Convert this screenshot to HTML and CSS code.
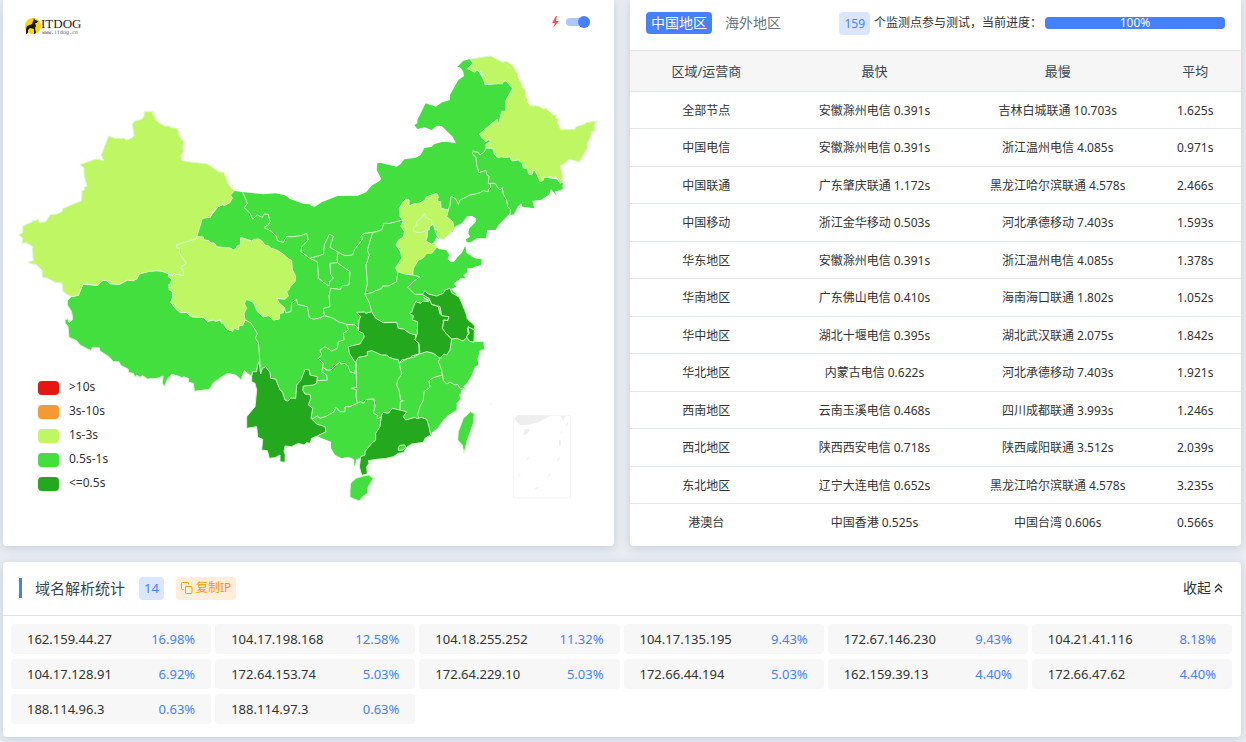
FILE: index.html
```html
<!DOCTYPE html>
<html lang="zh-CN">
<head>
<meta charset="utf-8">
<meta name="viewport" content="width=device-width, initial-scale=1">
<title>ITDOG</title>
<link rel="stylesheet" href="styles.css">
</head>
<body>
<main class="page">
  <section class="card map-card">
    <svg class="map" viewBox="9 0 1833 1638" role="img" aria-label="中国地区">
      <g class="land">
        <g transform="translate(1140 120)">
          <path d="M0 368L50 380 62 372 73 358 108 353 122 345 133 324 155 320 162 313 185 306 200 305 228 310 218 290 185 258 170 257 155 270 135 262 112 267 103 255 112 250 112 240 137 190 167 200 187 187 210 180 210 165 235 120 252 108 250 95 240 82 232 80 250 62 270 57 290 85 310 120 385 125 405 140 390 200 370 230 340 300 400 340 440 370 480 410 540 420 548 430 548 448 525 455 530 467 513 447 508 463 483 480 457 482 463 505 427 500 425 490 413 500 402 523 392 525 390 520 355 555 347 570 322 570 318 595 290 595 272 607 260 607 258 598 270 590 265 580 268 565 288 545 287 535 277 528 262 528 245 550 224 560 220 572 205 585 190 597 178 597 165 592 163 610 170 622 178 628 198 630 208 645 203 657 213 667 222 665 233 650 245 640 256 617 260 640 285 655 305 658 303 675 285 680 275 685 262 685 262 697 250 705 257 715 240 715 235 722 0 722 0 425 3 415 -10 390 -8 370Z"/>
        </g>
        <g transform="translate(690 510)">
          <path d="M13 63L38 66 100 73 135 70 165 76 180 87 195 92 220 102 240 103 243 108 255 110 275 97 322 78 383 77 408 67 425 47 453 30 460 100 520 329 690 325 672 340 678 350 663 357 688 382 708 430 712 447 735 468 732 520 700 600 0 600 -60 270 -100 200 -83 145 -59 142 -35 110 0 98 7 85 2 74Z"/>
        </g>
        <g transform="translate(690 930)">
          <path d="M732 95L760 95 763 118 750 120 745 140 742 145 745 165 735 170 725 195 712 218 700 230 707 238 693 240 692 252 687 255 692 265 680 280 680 300 655 315 640 330 622 355 605 368 602 378 585 385 580 397 545 402 530 412 520 428 505 430 490 440 470 445 440 448 415 452 392 445 378 447 376 465 373 468 372 448 355 440 335 445 315 435 303 415 303 395 275 385 262 378 65 200 85 100 85 0 700 0Z"/>
          <path class="edge" d="M362 520L378 505 400 498 415 495 430 505 415 530 412 550 398 560 388 573 375 568 360 562 360 540Z"/>
          <path class="edge" d="M685 365L700 325 722 305 733 312 730 340 712 390 702 430 697 405 683 390Z"/>
        </g>
      </g>
      <g class="edge" transform="translate(0 270)">
        <path class="land" d="M213 620L235 616 249 583 292 586 309 571 321 572 328 581 358 583 383 570 398 572 411 566 417 552 447 544 467 542 484 543 507 552 505 560 515 568 512 583 507 583 508 600 517 604 519 621 512 636 528 658 543 668 559 667 575 680 612 683 622 694 640 690 648 694 664 689 680 716 695 722 717 707 728 706 735 690 752 698 757 706 772 730 766 745 775 757 778 790 780 830 776 815 770 845 758 845 755 860 733 842 723 870 716 862 707 855 683 850 663 862 640 878 628 898 583 904 580 880 566 877 565 865 552 860 545 863 535 858 515 853 502 868 493 890 487 880 489 858 472 865 442 867 427 856 421 862 410 855 405 862 400 850 386 848 384 837 362 826 357 815 340 815 327 800 300 783 298 773 277 772 273 782 240 765 230 752 207 742 204 710 196 700 195 690 203 686 208 698 218 688 215 665 202 645 202 632Z"/>
        <path class="lime" d="M590 440L610 441 612 450 627 452 631 458 644 460 650 470 675 473 688 473 700 480 709 475 711 468 721 464 722 442 755 453 762 448 775 447 785 452 795 465 806 468 813 475 825 478 850 492 859 502 875 512 877 540 887 558 885 575 870 590 868 598 860 605 865 618 855 628 830 625 840 642 853 652 850 668 838 672 838 687 820 690 805 677 790 681 772 665 760 637 740 628 733 640 740 655 732 670 735 690 728 706 717 707 715 720 702 714 698 725 695 718 690 722 680 716 671 700 664 700 661 689 648 694 640 690 622 694 612 683 575 680 559 667 543 668 528 658 512 636 519 621 517 604 508 600 507 583 512 583 515 568 505 560 507 552 519 556 521 550 532 553 550 557 550 544 541 532 559 519 547 503 537 489 539 475 532 475 528 465 588 446Z"/>
        <path class="lime" d="M432 65L460 65 458 73 466 83 464 88 484 103 495 109 507 108 514 113 527 114 536 124 536 135 549 153 551 162 547 172 551 183 542 196 546 212 580 217 622 222 655 245 672 248 686 285 703 303 692 314 697 325 689 338 672 347 668 342 655 350 635 368 631 382 607 385 590 440 588 446 528 465 532 475 539 475 537 489 547 503 559 519 541 532 550 544 550 557 532 553 521 550 519 556 507 552 484 543 467 542 447 544 417 552 411 566 398 572 383 570 358 583 328 581 321 572 309 571 292 586 268 583 249 583 242 598 235 616 213 620 201 613 189 605 186 579 166 577 143 565 127 562 126 540 108 523 96 522 84 517 102 511 99 504 97 469 79 458 66 460 68 445 57 434 68 428 69 408 98 395 97 391 107 393 114 386 119 399 137 395 151 374 172 372 186 365 188 356 245 332 246 302 254 300 252 291 261 289 252 254 252 233 240 224 288 207 311 212 304 195 326 138 344 145 371 145 380 150 395 144 402 137 397 103 404 93 424 89 432 79Z"/>
      </g>
      <g class="edge" transform="translate(1140 120)">
        <path class="lime" d="M270 57L332 48 368 67 380 64 402 80 402 87 413 100 413 112 425 130 427 142 436 152 438 173 443 177 443 187 450 197 475 198 490 207 497 205 520 225 530 226 526 234 535 238 532 248 542 269 585 268 588 260 612 253 622 247 652 243 642 256 645 272 635 275 632 290 622 310 622 323 610 345 605 352 598 366 567 357 556 368 542 377 545 400 548 408 548 425 540 430 528 410 520 413 510 410 492 413 488 423 480 425 466 392 460 390 457 402 447 404 442 387 430 384 427 370 415 360 395 363 390 350 375 353 365 350 353 353 343 343 338 324 318 324 318 312 330 306 330 297 316 305 298 282 352 237 356 255 365 214 377 214 377 182 398 145 377 122 371 122 368 131 355 131 315 134 305 98 290 90 285 97 263 86 279 70Z"/>
        <path class="lime" d="M70 485L78 477 87 480 87 498 100 492 118 490 135 480 140 470 170 460 175 470 172 483 182 485 183 505 205 510 200 530 218 545 222 565 205 585 190 597 178 597 172 585 172 570 160 567 160 553 150 558 150 570 142 573 142 600 165 612 170 622 155 640 140 640 128 655 115 660 100 685 98 705 75 702 52 695 47 683 65 655 62 635 48 615 55 600 70 592 73 575 62 558 70 543 60 530 58 505Z"/>
        <path class="land" d="M150 558L160 553 165 570 172 590 163 608 155 612 137 603 142 590 142 573Z"/>
        <path class="line" d="M100 573L102 560 112 557 110 545 125 532 133 520 140 535 155 540 155 555 147 560 148 570 137 570 128 577 110 577Z"/>
        <path class="line" d="M338 324L318 324 313 335 300 345 295 337 283 335 280 332 277 342 288 352 290 375 297 398 318 391 320 403 327 408 325 430 345 430 355 445 360 450 367 443 370 463 380 480 383 500 392 510 390 522M325 430L332 432 332 442 325 448 325 455 310 452 300 458 285 462 270 465 240 480 235 493 228 478 220 472 213 470 210 495 205 510M70 540L55 543 30 550 12 550 5 570 -12 575"/>
      </g>
      <g class="edge" transform="translate(690 510)">
        <path class="line" d="M38 66L52 100 43 113 60 130 68 147 82 135 97 142 102 132 115 133 120 155 115 165 102 172 125 185 140 200 142 212 160 217 170 200 190 200 212 197 230 190 235 210 215 230 213 245 240 265 280 253 283 225 298 193 310 198 300 232 325 247 345 257 368 255 373 240 397 208 395 195 405 190 428 187 440 185M240 265L262 275 265 310 265 325 285 340 297 348 300 333 310 325 302 312 300 280 322 278 322 258 325 247M322 278L360 305 357 345 335 348 332 358 302 355 297 378 300 410 280 415 283 435 270 445M163 412L167 428 183 425 185 398 200 388 203 403 232 410 238 443 250 447 265 445 285 437 310 445 325 455 350 463 375 465 388 480M428 187L412 240 418 255 408 285 412 340 405 373 425 368 455 355 458 348 475 348 500 335 503 307M405 373L418 398 425 425M548 315L570 320 550 335 533 352 555 373 577 373M350 463L355 480 340 490 342 510 325 515 322 535 305 543 285 530 270 540 275 555 265 565 280 580"/>
        <path class="dark" d="M380 427L403 426 408 430 425 425 437 445 460 458 500 457 505 475 520 477 540 490 558 495 555 510 567 520 567 552 550 562 532 565 508 580 504 568 495 568 478 562 470 555 455 555 425 542 412 545 412 557 385 562 376 578 358 550 355 530 375 525 390 522 403 500 400 490 385 483 387 450 392 440Z"/>
        <path class="dark" d="M550 412L557 395 572 400 580 393 597 395 580 382 605 395 605 403 625 410 630 432 657 440 653 452 640 450 640 475 648 490 665 507 660 540 650 555 642 552 630 565 610 550 590 545 570 552 567 520 555 510 562 490 563 455 547 450 550 437 537 430 545 427Z"/>
        <path class="dark" d="M577 373L585 362 595 372 620 378 640 370 645 360 660 355 665 368 688 382 708 430 712 447 735 468 730 482 712 475 715 490 708 505 700 513 680 505 665 507 648 490 637 475 642 450 653 452 657 440 635 437 630 410 605 403 597 385Z"/>
        <path class="dark" d="M714 470L733 480 732 517 717 513 710 500 717 490Z"/>
      </g>
      <g class="edge" transform="translate(690 930)">
        <path class="line" d="M280 160L278 170 290 180 303 180 318 165 330 156 333 162 345 160 355 170 360 185 375 190 378 158M290 180L278 172 275 185 290 195 292 210 262 212M378 158L380 232 365 235 380 240 378 258 382 280 360 290 345 290 345 305 330 305 318 292 312 305 290 318 270 325 262 318 245 328M382 280L392 275 400 280 410 268 432 267 435 290 430 310 442 315 442 327 455 320M508 160L512 180 516 190 503 210 500 225 507 240 512 270 520 272 511 275 510 300M508 160L515 150 540 145 545 138 575 130M630 145L625 155 635 180 637 195 610 203 597 212 600 232 582 245 580 270 570 290 562 315 568 325M637 192L640 212 650 222 660 216 675 225 683 223 690 235 707 238"/>
        <path class="dark" d="M65 200L68 185 80 185 83 165 88 157 92 192 97 175 107 170 120 188 122 205 137 207 150 240 157 245 165 270 172 273 185 264 197 265 200 225 213 210 225 178 238 180 240 195 262 200 260 220 250 225 220 228 218 240 225 252 240 253 242 265 235 285 248 295 243 325 260 342 285 350 288 365 262 378 245 385 240 400 230 398 222 405 205 400 185 410 165 408 162 425 166 435 165 457 150 455 150 435 135 443 118 445 112 422 95 420 98 388 83 382 80 350 50 355 50 320 75 290 80 240 75 220 65 215Z"/>
        <path class="dark" d="M455 315L460 307 475 310 487 295 510 300 530 305 520 320 527 330 555 322 562 326 573 322 590 328 597 350 602 375 585 385 580 397 545 402 530 412 520 428 505 430 490 440 470 445 440 448 415 452 417 460 410 470 412 492 395 496 388 470 392 440 405 435 405 425 425 400 437 390 437 370 450 350 452 335Z"/>
        <path class="land" d="M505 412L510 406 525 405 527 412 518 420 505 421Z"/>
      </g>
      <g class="inset" transform="translate(1470 1170)">
        <path class="inset-frame" d="M82 77H241V324H71V88Z"/>
        <path d="M72 86L83 76H184L145 97 111 105H90ZM104 119L120 116 111 133 101 136ZM211 78H227L219 92ZM232 97L236 94 231 108 227 108ZM207 151H212V168H207ZM201 210L211 196 207 209 202 213ZM106 212L115 201 119 203ZM171 265L183 244 179 257ZM100 158L107 175M88 247L92 266 88 258ZM134 294L148 291 138 298ZM212 132L217 120 216 128ZM0 44L6 40 4 47Z"/>
      </g>
    </svg>
    <header class="map-head">
      <svg class="logo" viewBox="0 0 60 20" role="img" aria-label="ITDOG">
        <circle cx="9" cy="10" r="8" fill="#fbd50b"/>
        <path d="M10 2L11 4 14 5 13 7 11 7 12 10 11 12 12 17 10 18 10 13 6 12 4 14 4 17 2 18 2 13 3 10 8 8 9 5Z" fill="#191919"/>
        <text class="logo-name" x="17" y="12">ITDOG</text>
        <text class="logo-url" x="18" y="18">www.itdog.cn</text>
      </svg>
      <label class="speed">
        <svg class="bolt" viewBox="0 0 8 12" aria-hidden="true"><path d="M5 0L1 7H4L2 12 8 5H5L6 0Z" fill="#fa5252"/></svg>
        <input class="switch" type="checkbox" aria-label="加速" checked>
      </label>
    </header>
    <ul class="legend">
      <li><span class="swatch red"></span><span class="range">&gt;10s</span></li>
      <li><span class="swatch orange"></span><span class="range">3s-10s</span></li>
      <li><span class="swatch yellow"></span><span class="range">1s-3s</span></li>
      <li><span class="swatch green"></span><span class="range">0.5s-1s</span></li>
      <li><span class="swatch deep"></span><span class="range">&lt;=0.5s</span></li>
    </ul>
  </section>

  <section class="card">
    <header class="test-head">
      <nav class="tabs">
        <button class="tab active" type="button">中国地区</button>
        <button class="tab" type="button">海外地区</button>
      </nav>
      <div class="status">
        <span class="badge">159</span>
        <span class="status-text">个监测点参与测试，当前进度：</span>
        <div class="progress" role="progressbar" aria-label="当前进度" aria-valuenow="100"><div class="progress-fill" style="width:100%">100%</div></div>
      </div>
    </header>
    <table class="results">
      <colgroup><col class="c-area"><col class="c-node"><col class="c-node"><col class="c-avg"></colgroup>
      <thead><tr><th>区域/运营商</th><th>最快</th><th>最慢</th><th>平均</th></tr></thead>
      <tbody>
        <tr><td>全部节点</td><td>安徽滁州电信 0.391s</td><td>吉林白城联通 10.703s</td><td>1.625s</td></tr>
        <tr><td>中国电信</td><td>安徽滁州电信 0.391s</td><td>浙江温州电信 4.085s</td><td>0.971s</td></tr>
        <tr><td>中国联通</td><td>广东肇庆联通 1.172s</td><td>黑龙江哈尔滨联通 4.578s</td><td>2.466s</td></tr>
        <tr><td>中国移动</td><td>浙江金华移动 0.503s</td><td>河北承德移动 7.403s</td><td>1.593s</td></tr>
        <tr><td>华东地区</td><td>安徽滁州电信 0.391s</td><td>浙江温州电信 4.085s</td><td>1.378s</td></tr>
        <tr><td>华南地区</td><td>广东佛山电信 0.410s</td><td>海南海口联通 1.802s</td><td>1.052s</td></tr>
        <tr><td>华中地区</td><td>湖北十堰电信 0.395s</td><td>湖北武汉联通 2.075s</td><td>1.842s</td></tr>
        <tr><td>华北地区</td><td>内蒙古电信 0.622s</td><td>河北承德移动 7.403s</td><td>1.921s</td></tr>
        <tr><td>西南地区</td><td>云南玉溪电信 0.468s</td><td>四川成都联通 3.993s</td><td>1.246s</td></tr>
        <tr><td>西北地区</td><td>陕西西安电信 0.718s</td><td>陕西咸阳联通 3.512s</td><td>2.039s</td></tr>
        <tr><td>东北地区</td><td>辽宁大连电信 0.652s</td><td>黑龙江哈尔滨联通 4.578s</td><td>3.235s</td></tr>
        <tr><td>港澳台</td><td>中国香港 0.525s</td><td>中国台湾 0.606s</td><td>0.566s</td></tr>
      </tbody>
    </table>
  </section>

  <section class="card dns">
    <header class="dns-head">
      <h2 class="dns-title">域名解析统计</h2>
      <span class="badge">14</span>
      <button class="copy" type="button">
        <svg class="copy-icon" viewBox="0 0 12 12" aria-hidden="true"><path d="M2.5 7.5H1.5A1 1 0 0 1 .5 6.500V1.500A1 1 0 0 1 1.500.5H6.500A1 1 0 0 1 7.500 1.500V2.500M4.500 4.500H10A1 1 0 0 1 11 5.500V10.500A1 1 0 0 1 10 11.500H5.500A1 1 0 0 1 4.500 10.500Z"/></svg>复制IP
      </button>
      <button class="fold" type="button">收起<svg class="fold-icon" viewBox="0 0 9 10" aria-hidden="true"><path d="M1 5L4.500 1.500 8 5M1 9L4.500 5.500 8 9"/></svg></button>
    </header>
    <ul class="ips">
      <li><span>162.159.44.27</span><b>16.98%</b></li>
      <li><span>104.17.198.168</span><b>12.58%</b></li>
      <li><span>104.18.255.252</span><b>11.32%</b></li>
      <li><span>104.17.135.195</span><b>9.43%</b></li>
      <li><span>172.67.146.230</span><b>9.43%</b></li>
      <li><span>104.21.41.116</span><b>8.18%</b></li>
      <li><span>104.17.128.91</span><b>6.92%</b></li>
      <li><span>172.64.153.74</span><b>5.03%</b></li>
      <li><span>172.64.229.10</span><b>5.03%</b></li>
      <li><span>172.66.44.194</span><b>5.03%</b></li>
      <li><span>162.159.39.13</span><b>4.40%</b></li>
      <li><span>172.66.47.62</span><b>4.40%</b></li>
      <li><span>188.114.96.3</span><b>0.63%</b></li>
      <li><span>188.114.97.3</span><b>0.63%</b></li>
    </ul>
  </section>
</main>
</body>
</html>
```

FILE: styles.css
```css
* { box-sizing: border-box; }

body {
  margin: 0;
  background: #e9edf2;
  color: #333;
  font: 12px/18px "Noto Sans", "Noto Sans CJK SC", sans-serif;
}

button {
  border: 0;
  padding: 0;
  background: none;
  color: inherit;
  font: inherit;
  cursor: pointer;
}

ul { list-style: none; margin: 0; padding: 0; }

.page {
  display: grid;
  grid-template-columns: 1fr 1fr;
  gap: 16px;
  padding: 0 5px 5px 3px;
}

.card {
  background: #fff;
  border-radius: 0 0 4px 4px;
  box-shadow: 0 2px 10px rgba(90, 115, 145, .25);
}

/* Map: the drawing, its header and its legend share one grid cell */
.map-card { display: grid; }
.map-card > * { grid-area: 1 / 1; }

.map { display: block; width: 100%; height: auto; }
.land { fill: #43df3e; }
.lime { fill: #bff663; }
.dark { fill: #24a91e; }
.line { fill: none; }
.edge { stroke: #d9f9cd; stroke-width: 3; stroke-linejoin: round; }
.inset { fill: #eee; }
.inset-frame { fill: none; stroke: #f5f5f5; stroke-width: 3; }

.map-head {
  align-self: start;
  display: flex;
  justify-content: space-between;
  align-items: flex-start;
  padding: 16px 24px 0 21px;
}
.logo { width: 60px; height: 20px; }
.logo-name { font: 13px "Liberation Serif", serif; fill: #222; }
.logo-url { font: 5px "DejaVu Sans Mono", monospace; fill: #555; }

.speed { display: flex; align-items: center; gap: 7px; }
.bolt { width: 8px; height: 12px; }
.switch {
  appearance: none;
  display: flex;
  align-items: center;
  justify-content: flex-end;
  width: 24px;
  height: 8px;
  margin: 0;
  border-radius: 4px;
  background: #adc7fd;
}
.switch::before {
  content: "";
  flex: none;
  width: 12px;
  height: 12px;
  border-radius: 50%;
  background: #4680ff;
}

.legend { place-self: end start; margin: 0 0 50px 35px; }
.legend li { display: flex; align-items: center; gap: 10px; height: 24px; }
.range { padding-bottom: 2px; }
.swatch { width: 21px; height: 14px; border-radius: 4px; }
.red { background: #e61610; }
.orange { background: #f79932; }
.yellow { background: #bff663; }
.green { background: #43df3e; }
.deep { background: #24a91e; }

/* Test results */
.test-head {
  display: flex;
  justify-content: space-between;
  align-items: center;
  height: 51px;
  padding: 0 16px 4px;
  border-bottom: 1px solid #dfe6ec;
}
.tabs, .status { display: flex; align-items: center; }
.tabs { gap: 8px; }
.status { gap: 4px; }
.tab {
  height: 22px;
  padding: 0 5px;
  border-radius: 4px;
  color: #6c757d;
  font-size: 14px;
  line-height: 22px;
}
.active { background: #4680ff; color: #fff; }
.badge {
  padding: 0 5px;
  border-radius: 4px;
  background: #dae6ff;
  color: #4680ff;
  line-height: 23px;
}
.status-text { width: 167px; white-space: nowrap; }
.progress { width: 180px; border-radius: 4px; background: #e9ecef; }
.progress-fill {
  border-radius: 4px;
  background: #4680ff;
  color: #fff;
  text-align: center;
  line-height: 12px;
}

.results { width: 100%; table-layout: fixed; border-collapse: collapse; margin-bottom: 5px; }
.c-area { width: 25%; }
.c-node { width: 30%; }
.c-avg { width: 15%; }
.results th, .results td {
  height: 37px;
  padding: 0;
  border-bottom: 1px solid #e2e7ec;
  text-align: center;
  white-space: nowrap;
}
.results td { padding-top: 2px; }
.results tr:nth-child(even) td { height: 38px; }
.results tr:last-child td { border-bottom: 0; }
.results thead th {
  height: 40px;
  border-bottom: 1px solid #dfe6ec;
  background: #f6f6f6;
  color: #37474f;
  font-size: 13px;
  font-weight: 400;
}

/* Resolved addresses */
.dns { grid-column: 1 / -1; border-radius: 4px; }
.dns-head {
  display: flex;
  align-items: center;
  gap: 12px;
  height: 54px;
  padding: 0 18px 1px 16px;
  border-bottom: 1px solid #dfe2e4;
}
.dns-title {
  margin: 0;
  padding-left: 13px;
  border-left: 3px solid #4680ff;
  color: #37474f;
  font-size: 15px;
  font-weight: 400;
  line-height: 20px;
}
.dns-head .badge { font-size: 13px; margin-left: 2px; }
.copy {
  display: flex;
  align-items: center;
  gap: 3px;
  height: 23px;
  padding: 0 5px;
  border-radius: 4px;
  background: #ffefda;
  color: #ff9800;
}
.copy-icon { width: 12px; height: 12px; fill: none; stroke: currentColor; }
.fold { display: flex; align-items: center; gap: 3px; margin-left: auto; font-size: 14px; }
.fold-icon { width: 9px; height: 10px; fill: none; stroke: currentColor; stroke-width: 1.3; }

.ips {
  display: grid;
  grid-template-columns: repeat(6, 1fr);
  gap: 5px 4px;
  padding: 8px 9px 13px 8px;
}
.ips li {
  display: flex;
  justify-content: space-between;
  padding: 0 16px;
  border-radius: 4px;
  background: #f7f7f7;
  font-size: 13px;
  line-height: 30px;
}
.ips b { color: #4680ff; font-weight: 400; }
```
